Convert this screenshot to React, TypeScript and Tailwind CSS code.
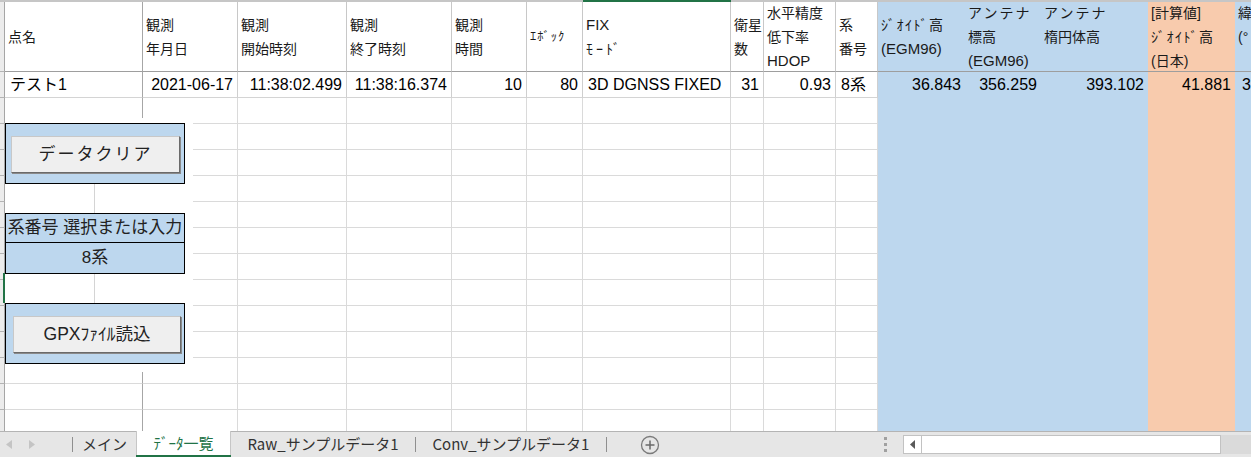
import type { ReactNode } from 'react';

type Kind = 'edge' | 'plain' | 'blue' | 'orange';

const COLS: { w: string; kind: Kind; sel?: boolean }[] = [
  { w: 'w-[138px]', kind: 'edge' },
  { w: 'w-[95px]', kind: 'plain' },
  { w: 'w-[109px]', kind: 'plain' },
  { w: 'w-[105px]', kind: 'plain' },
  { w: 'w-[75px]', kind: 'plain' },
  { w: 'w-[56px]', kind: 'plain' },
  { w: 'w-[148px]', kind: 'plain', sel: true },
  { w: 'w-[33px]', kind: 'plain' },
  { w: 'w-[72px]', kind: 'plain' },
  { w: 'w-[42px]', kind: 'plain' },
  { w: 'w-[87px]', kind: 'blue' },
  { w: 'w-[76px]', kind: 'blue' },
  { w: 'w-[107px]', kind: 'blue' },
  { w: 'w-[87px]', kind: 'orange' },
  { w: 'w-[90px]', kind: 'blue' },
];

const HEAD_CLS: Record<Kind, string> = {
  edge: 'border-r border-b border-r-[#a6a6a6] border-b-[#9e9e9e]',
  plain: 'border-r border-b border-r-[#c8c8c8] border-b-[#9e9e9e]',
  blue: 'bg-[#bdd7ee] border-b border-b-[#9e9e9e]',
  orange: 'bg-[#f8cbad] border-b border-b-[#9e9e9e]',
};

const DATA_CLS: Record<Kind, string> = {
  edge: 'border-r border-b border-r-[#a6a6a6] border-b-[#d4d4d4]',
  plain: 'border-r border-b border-r-[#cfcfcf] border-b-[#d4d4d4]',
  blue: 'bg-[#bdd7ee]',
  orange: 'bg-[#f8cbad]',
};

const EMPTY_CLS: Record<Kind, string> = {
  edge: 'border-r border-b border-r-[#a6a6a6] border-b-[#dadada]',
  plain: 'border-r border-b border-[#dadada]',
  blue: 'bg-[#bdd7ee]',
  orange: 'bg-[#f8cbad]',
};

// latin lines of the header are drawn a touch larger, like the sheet font
const L = ({ children }: { children: ReactNode }) => <span className="text-[15px]">{children}</span>;

const HEADERS: ReactNode[][] = [
  ['点名'],
  ['観測', '年月日'],
  ['観測', '開始時刻'],
  ['観測', '終了時刻'],
  ['観測', '時間'],
  [<span className="text-[12.5px] tracking-[1px]">ｴﾎﾞｯｸ</span>],
  [<L>FIX</L>, <span className="tracking-[3px]">ﾓｰﾄﾞ</span>],
  ['衛星', '数'],
  ['水平精度', '低下率', <L>HDOP</L>],
  ['系', '番号'],
  [<span className="tracking-[1.5px]">ｼﾞｵｲﾄﾞ高</span>, <L>(EGM96)</L>],
  [<span className="tracking-[2px]">アンテナ</span>, '標高', <L>(EGM96)</L>],
  [<span className="tracking-[2px]">アンテナ</span>, '楕円体高', '\u00a0'],
  ['[計算値]', <span className="tracking-[1.5px]">ｼﾞｵｲﾄﾞ高</span>, '(日本)'],
  ['緯', '(°', '\u00a0'],
];

const DATA: { text: string; right?: boolean }[] = [
  { text: 'テスト1' },
  { text: '2021-06-17', right: true },
  { text: '11:38:02.499', right: true },
  { text: '11:38:16.374', right: true },
  { text: '10', right: true },
  { text: '80', right: true },
  { text: '3D DGNSS FIXED' },
  { text: '31', right: true },
  { text: '0.93', right: true },
  { text: '8系' },
  { text: '36.843', right: true },
  { text: '356.259', right: true },
  { text: '393.102', right: true },
  { text: '41.881', right: true },
  { text: '3' },
];

const EMPTY_ROWS = 13;

function Row({ h, children }: { h: string; children: ReactNode }) {
  return (
    <div className={`flex shrink-0 ${h}`}>
      <div className="w-[5px] shrink-0 bg-[#ececec] border-r border-b border-r-[#a6a6a6] border-b-[#b4b4b4]" />
      {children}
    </div>
  );
}

function SheetButton({ label, w, pad }: { label: ReactNode; w: string; pad: string }) {
  return (
    <div className={pad}>
      <button
        className={`${w} h-[37px] flex items-center justify-center bg-[#efefef] border border-t-[#c8c8c8] border-l-[#c8c8c8] border-r-[#6a6a6a] border-b-[#6a6a6a] shadow-[1px_1px_0_0_#8a8a8a] text-[#222] text-[17px]`}
      >
        {label}
      </button>
    </div>
  );
}

function Panel() {
  return (
    <div className="absolute left-[5px] top-[118px] w-[188px] h-[254px] bg-white pt-[5px] flex flex-col">
      <div className="w-[180px] h-[61px] bg-[#bdd7ee] border border-black">
        <SheetButton label={<span className="tracking-[2px]">データクリア</span>} w="w-[169px]" pad="pt-[12px] pl-[5px]" />
      </div>
      <div className="h-[29px] flex">
        <div className="w-[90px] border-r border-[#d4d4d4]" />
      </div>
      <div className="w-[180px] h-[61px] bg-[#bdd7ee] border border-black flex flex-col text-[17px] text-[#222]">
        <div className="h-[29px] flex items-center justify-center whitespace-nowrap border-b border-black">系番号 選択または入力</div>
        <div className="flex-1 flex items-center justify-center">8系</div>
      </div>
      <div className="h-[29px] flex">
        <div className="w-[90px] border-r border-[#d4d4d4]" />
      </div>
      <div className="w-[180px] h-[61px] bg-[#bdd7ee] border border-black">
        <SheetButton label={<span className="text-[17.5px]">GPXﾌｧｲﾙ読込</span>} w="w-[168px]" pad="pt-[12px] pl-[7px]" />
      </div>
    </div>
  );
}

function Tab({ w, label, active }: { w: string; label: string; active?: boolean }) {
  return (
    <div
      className={`${w} shrink-0 flex items-center justify-center ${
        active
          ? 'bg-white text-[#217346] border-b-[2px] border-[#217346] -mt-px shadow-[inset_1px_0_0_#c6c6c6,inset_-1px_0_0_#c6c6c6]'
          : 'text-[#333]'
      }`}
    >
      {label}
    </div>
  );
}

function Sep() {
  return <div className="w-px h-[15px] self-center bg-[#8f8f8f] shrink-0" />;
}

function TabBar() {
  return (
    <div className="h-[26px] shrink-0 flex bg-[#e6e6e6] border-t border-[#b4b4b4] text-[15px] font-['Noto_Sans_CJK_JP',sans-serif]">
      <div className="w-[72px] shrink-0 flex items-center">
        <svg className="ml-[6px]" width="6" height="9" viewBox="0 0 6 9">
          <path d="M6 0 L0 4.5 L6 9 Z" fill="#c4c4c4" />
        </svg>
        <svg className="ml-[17px]" width="6" height="9" viewBox="0 0 6 9">
          <path d="M0 0 L6 4.5 L0 9 Z" fill="#c4c4c4" />
        </svg>
      </div>
      <Sep />
      <Tab w="w-[63px]" label="メイン" />
      <Tab w="w-[95px]" label="ﾃﾞｰﾀ一覧" active />
      <Tab w="w-[184px]" label="Raw_サンプルデータ1" />
      <Sep />
      <Tab w="w-[190px]" label="Conv_サンプルデータ1" />
      <Sep />
      <div className="ml-[33px] w-[20px] shrink-0 flex items-center">
        <svg width="20" height="20" viewBox="0 0 20 20">
          <circle cx="10" cy="10" r="8.5" fill="none" stroke="#7a7a7a" strokeWidth="1.3" />
          <path d="M10 5.5 V14.5 M5.5 10 H14.5" stroke="#6a6a6a" strokeWidth="1.5" />
        </svg>
      </div>
      <div className="ml-[220px] w-[10px] shrink-0 flex flex-col items-center justify-center gap-[3px]">
        <div className="w-[3px] h-[3px] bg-[#a0a0a0]" />
        <div className="w-[3px] h-[3px] bg-[#a0a0a0]" />
        <div className="w-[3px] h-[3px] bg-[#a0a0a0]" />
      </div>
      <div className="ml-[13px] flex-1 flex items-center">
        <div className="w-[318px] h-[19px] flex bg-white border border-[#c2c2c2]">
          <div className="w-[18px] h-full border-r border-[#c2c2c2] flex items-center justify-center">
            <svg width="5" height="9" viewBox="0 0 5 9">
              <path d="M5 0 L0 4.5 L5 9 Z" fill="#5a5a5a" />
            </svg>
          </div>
        </div>
        <div className="flex-1 h-[19px] bg-[#dadada]" />
      </div>
    </div>
  );
}

export default function App() {
  return (
    <div className="w-[1251px] h-[457px] overflow-hidden bg-white flex flex-col font-['Liberation_Sans','Noto_Sans_CJK_JP',sans-serif] text-black">
      <div className="relative h-[431px] shrink-0 overflow-hidden flex flex-col">
        {/* column header remnant */}
        <div className="flex h-[2px] shrink-0">
          <div className="w-[5px] shrink-0 bg-[#c6c6c6]" />
          {COLS.map((c, i) => (
            <div key={i} className={`${c.w} shrink-0 ${c.sel ? 'bg-[#217346]' : 'bg-[#c6c6c6]'}`} />
          ))}
        </div>

        {/* header row */}
        <Row h="h-[70px]">
          {COLS.map((c, i) => (
            <div
              key={i}
              className={`${c.w} shrink-0 ${HEAD_CLS[c.kind]} flex flex-col justify-center pl-[3px] leading-[24px] text-[14px] text-[#1a1a1a] whitespace-nowrap overflow-hidden`}
            >
              {HEADERS[i].map((line, j) => (
                <div key={j}>{line}</div>
              ))}
            </div>
          ))}
        </Row>

        {/* data row */}
        <Row h="h-[26px]">
          {COLS.map((c, i) => (
            <div
              key={i}
              className={`${c.w} shrink-0 ${DATA_CLS[c.kind]} flex items-center text-[16px] whitespace-nowrap overflow-hidden ${
                DATA[i].right ? 'justify-end pr-[4px]' : 'justify-start pl-[5px]'
              } ${i === 14 ? 'pl-[7px]' : ''}`}
            >
              {DATA[i].text}
            </div>
          ))}
        </Row>

        {/* empty rows */}
        {Array.from({ length: EMPTY_ROWS }).map((_, r) => (
          <Row key={r} h="h-[26px]">
            {COLS.map((c, i) => (
              <div key={i} className={`${c.w} shrink-0 ${EMPTY_CLS[c.kind]}`} />
            ))}
          </Row>
        ))}

        <Panel />
        <div className="absolute left-[3px] top-[273px] w-[2px] h-[30px] bg-[#217346]" />
      </div>
      <TabBar />
    </div>
  );
}
